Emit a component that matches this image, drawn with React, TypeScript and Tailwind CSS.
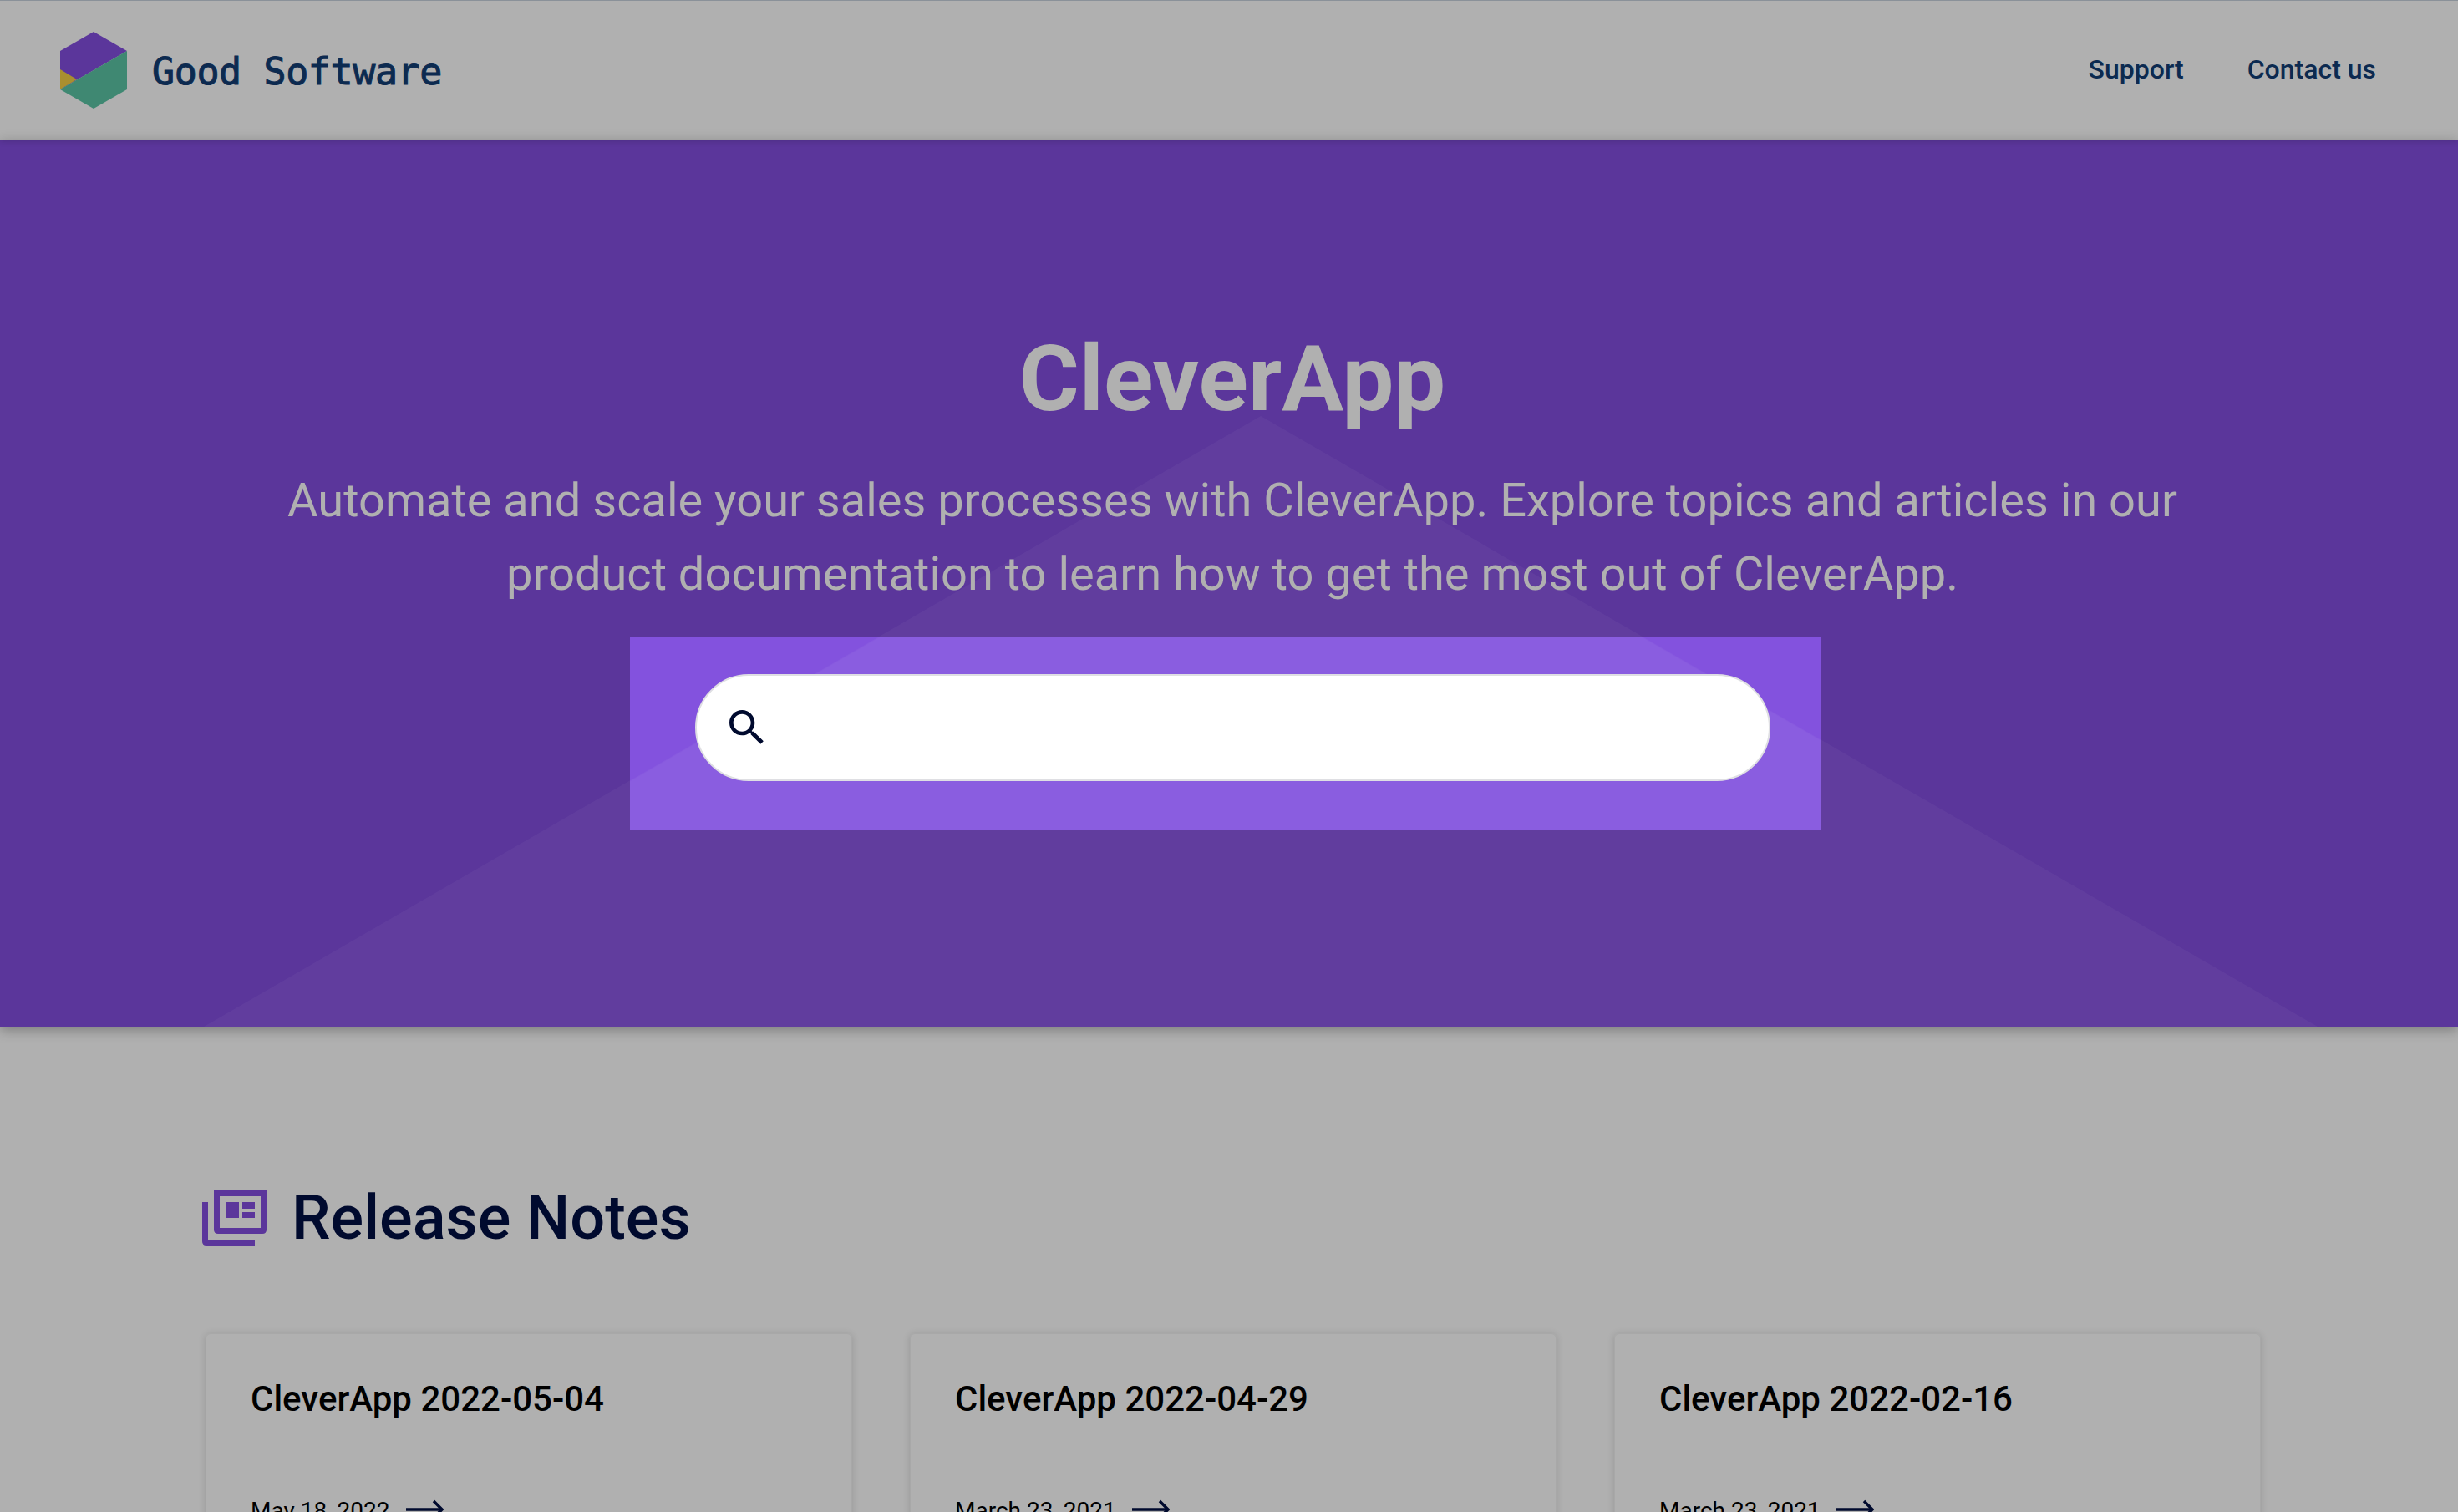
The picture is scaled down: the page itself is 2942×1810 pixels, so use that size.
import React from 'react';

const releases = [
  { title: 'CleverApp 2022-05-04', date: 'May 18, 2022' },
  { title: 'CleverApp 2022-04-29', date: 'March 23, 2021' },
  { title: 'CleverApp 2022-02-16', date: 'March 23, 2021' },
];

function Logo() {
  return (
    <svg width="80" height="92" viewBox="0 0 80 92" className="shrink-0">
      <path d="M40 0 L80 23 L0 69 L0 23 Z" fill="#5b369b" />
      <path d="M0 45 L20 57 L0 69 Z" fill="#a98f2f" />
      <path d="M80 23 L80 69 L40 92 L0 69 Z" fill="#3f8872" />
    </svg>
  );
}

function SearchIcon() {
  return (
    <svg width="56" height="56" viewBox="0 0 24 24" fill="#000a2e" className="shrink-0">
      <path d="M15.5 14h-.79l-.28-.27C15.41 12.59 16 11.11 16 9.5 16 5.91 13.09 3 9.5 3S3 5.91 3 9.5 5.91 16 9.5 16c1.61 0 3.09-.59 4.23-1.57l.27.28v.79l5 4.99L20.49 19l-4.99-5zm-6 0C7.01 14 5 11.99 5 9.5S7.01 5 9.5 5 14 7.01 14 9.5 11.99 14 9.5 14z" />
    </svg>
  );
}

function FeedIcon() {
  return (
    <svg width="77" height="66" viewBox="0 0 77 66" fill="#5b369b" className="shrink-0">
      <path d="M0 14 H7 V59 H63 V66 H5 Q0 66 0 61 Z" />
      <path fillRule="evenodd" d="M14 0 H77 V47 Q77 52 72 52 H19 Q14 52 14 47 Z M21 7 V45 H70 V7 Z" />
      <rect x="29" y="14" width="15" height="19" />
      <rect x="48" y="14" width="15" height="8" />
      <rect x="48" y="26" width="15" height="7" />
    </svg>
  );
}

function ArrowIcon() {
  return (
    <svg width="45" height="24" viewBox="0 0 45 24" fill="none" stroke="#000a2e" strokeWidth="3.5" className="mb-[5px] shrink-0">
      <path d="M0 12 H42" />
      <path d="M33 2 L43 12 L33 22" />
    </svg>
  );
}

export default function App() {
  return (
    <div className="h-screen overflow-hidden bg-[#b0b0b0] font-['Roboto',sans-serif]">
      <header className="relative z-20 flex h-[167px] items-center justify-between border-t border-[#8a9199] pl-[72px] pr-[98px] shadow-[0_1px_8px_rgba(0,0,0,0.2)]">
        <div className="flex items-center gap-[30px]">
          <Logo />
          <span className="mt-[2px] font-['DejaVu_Sans_Mono',monospace] text-[45px] leading-none tracking-[-0.4px] text-[#0c2a50] [-webkit-text-stroke:1px_#0c2a50]">Good Software</span>
        </div>
        <nav className="mb-[2px] flex items-center gap-[76px] text-[32px] font-medium text-[#0c2a50]">
          <a>Support</a>
          <a>Contact us</a>
        </nav>
      </header>

      <section className="relative z-10 flex h-[1062px] flex-col items-center bg-[#5b369b] pl-[8px] pt-[221px] shadow-[0_4px_14px_rgba(0,0,0,0.3)]">
        <svg className="absolute left-0 top-0 z-[1] h-full w-full" viewBox="0 0 2942 1062" preserveAspectRatio="none">
          <path d="M1509 331 L2774 1062 L244 1062 Z" fill="#ffffff" fillOpacity="0.04" />
        </svg>
        <h1 className="relative z-[2] text-[110px] font-bold leading-[132px] text-[#b0b0b0]">CleverApp</h1>
        <p className="relative z-[2] mt-[35px] w-[2300px] text-center text-[56px] font-normal leading-[88px] text-[#b0b0b0]">
          Automate and scale your sales processes with CleverApp. Explore topics and articles in our product documentation to learn how to get the most out of CleverApp.
        </p>
        <div className="relative mr-[16px] mt-[32px] w-[1426px] bg-[#8352de] pb-[59px] pl-[78px] pr-[61px] pt-[44px]">
          <svg className="absolute left-0 top-0 h-full w-full" viewBox="0 0 1426 231" preserveAspectRatio="none">
            <path d="M755 -264 L2020 467 L-510 467 Z" fill="#ffffff" fillOpacity="0.03" />
          </svg>
          <div className="relative z-[2] flex h-[128px] items-center rounded-full border-2 border-[#dfdfe3] bg-white pl-[32px]">
            <SearchIcon />
          </div>
        </div>
      </section>

      <main className="pl-[246px] pr-[236px] pt-[187px]">
        <div className="-ml-[4px] flex items-center gap-[30px]">
          <FeedIcon />
          <h2 className="text-[74px] font-medium leading-[84px] text-[#000a2e]">Release Notes</h2>
        </div>
        <div className="mt-[96px] grid grid-cols-3 gap-[69px]">
          {releases.map((release) => (
            <div key={release.title} className="h-[400px] rounded-[6px] border border-[#a8a8a8] px-[53px] pt-[50px] shadow-[0_1px_8px_rgba(0,0,0,0.15)]">
              <h3 className="text-[42px] font-medium leading-[56px] text-black">{release.title}</h3>
              <div className="mt-[90px] flex items-center gap-[19px] text-[28px] leading-[32px] text-black">
                <span>{release.date}</span>
                <ArrowIcon />
              </div>
            </div>
          ))}
        </div>
      </main>
    </div>
  );
}
